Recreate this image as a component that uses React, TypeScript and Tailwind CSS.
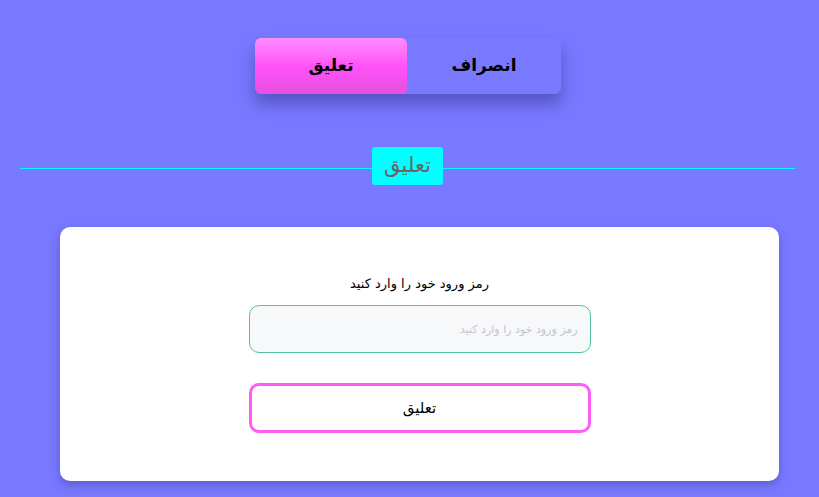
import { useState } from 'react';

const FONT = "font-['DejaVu_Sans','Noto_Sans',sans-serif]";

export default function App() {
  const [tab, setTab] = useState<'suspend' | 'cancel'>('suspend');
  const [password, setPassword] = useState('');

  return (
    <div className={`min-h-[497px] w-[819px] bg-[#7879ff] pt-[38px] ${FONT}`}>
      {/* segmented toggle */}
      <div className="ml-[255px] flex w-[306px] h-[56px] rounded-md bg-[#7879ff] shadow-[0_10px_16px_rgba(40,40,120,0.45)]">
        <button
          onClick={() => setTab('suspend')}
          className={`w-[152px] rounded-md text-[17px] font-bold text-black ${
            tab === 'suspend' ? 'bg-gradient-to-b from-[#ff8cff] via-[#ff52f7] to-[#e650e0]' : ''
          }`}
        >
          تعليق
        </button>
        <button
          onClick={() => setTab('cancel')}
          className={`flex-1 rounded-md text-[17px] font-bold text-black ${
            tab === 'cancel' ? 'bg-gradient-to-b from-[#ff8cff] via-[#ff52f7] to-[#e650e0]' : ''
          }`}
        >
          انصراف
        </button>
      </div>

      {/* divider with title */}
      <div className="relative ml-[20px] w-[775px] mt-[53px] h-[38px] flex items-center justify-center">
        <div className="absolute inset-x-0 top-[21px] h-px bg-[#00ffff]" />
        <span dir="rtl" className="relative bg-[#00ffff] text-[#666666] text-[21px] leading-none rounded-[3px] w-[71px] h-[38px] flex items-center justify-center pb-[2px]">
          تعليق
        </span>
      </div>

      {/* card */}
      <div dir="rtl" className="ml-[60px] w-[719px] mt-[42px] h-[254px] rounded-[10px] bg-white shadow-[0_4px_10px_rgba(40,40,120,0.35)] flex flex-col items-center pt-[47px]">
        <label className="text-[13px] text-black leading-[20px]">رمز ورود خود را وارد کنید</label>
        <input
          type="password"
          value={password}
          onChange={(e) => setPassword(e.target.value)}
          placeholder="رمز ورود خود را وارد کنید"
          className="mt-[11px] w-[342px] h-[48px] rounded-[10px] border border-[#52c39a] bg-[#f7f8fa] px-[12px] text-[11px] text-right outline-none placeholder:text-[#c4c4c8]"
        />
        <button className="mt-[30px] w-[342px] h-[50px] rounded-[10px] border-[3px] border-[#ff5cf5] bg-white text-[15px] text-black">
          تعليق
        </button>
      </div>
    </div>
  );
}
